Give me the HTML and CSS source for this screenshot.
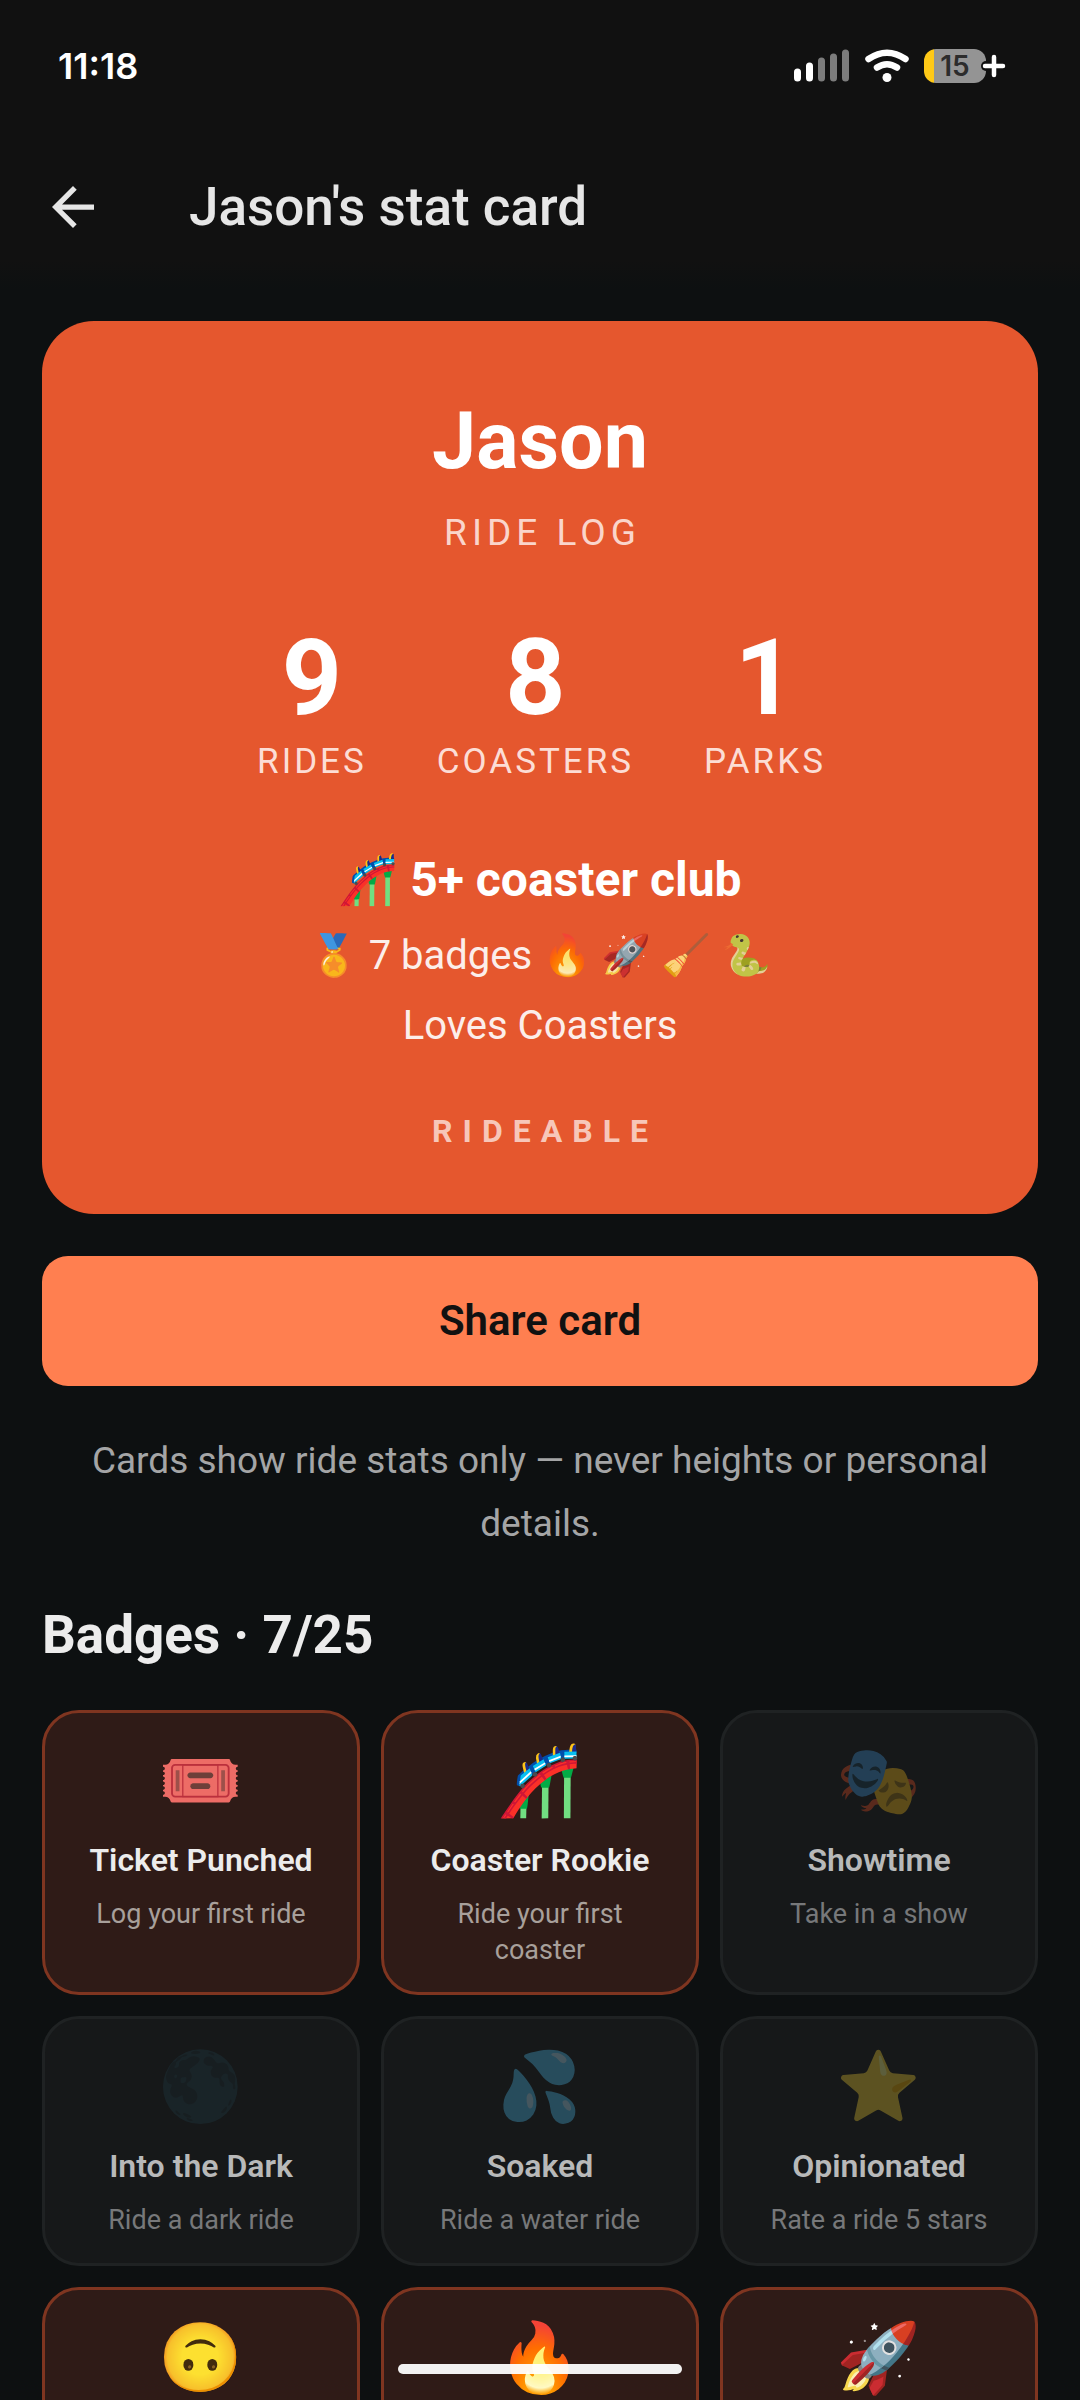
FILE: index.html
```html
<!DOCTYPE html>
<html lang="en">
<head>
<meta charset="utf-8">
<meta name="viewport" content="width=device-width, initial-scale=1">
<title>Jason's stat card</title>
<link rel="stylesheet" href="styles.css">
</head>
<body>
<div class="app">
  <div class="status-bar">
    <span class="clock">11:18</span>
    <div class="status-icons">
      <svg width="56" height="34" viewBox="0 0 56 34" aria-hidden="true">
        <g stroke-width="7" stroke-linecap="round" fill="none">
          <path stroke="#fff" d="M3.500 23v6M15.500 17v12"/>
          <path stroke="#7c7c7c" d="M27.500 12v17M39.500 8v21M51.500 4v25"/>
        </g>
      </svg>
      <svg width="44" height="34" viewBox="0 0 44 34" aria-hidden="true">
        <g fill="none" stroke="#fff" stroke-linecap="round">
          <path stroke-width="6.500" d="M3.500 10Q22-2.500 40.500 10"/>
          <path stroke-width="6.500" d="M12 18.500Q22 12 32 18.500"/>
        </g>
        <circle cx="22" cy="28.500" r="4.500" fill="#fff"/>
      </svg>
      <div class="battery">
        <span class="battery-text">15</span>
        <svg class="battery-plus" width="28" height="28" viewBox="0 0 28 28" aria-hidden="true">
          <g fill="none" stroke-linecap="round">
            <path stroke="#111" stroke-width="10" d="M7 14H22"/>
            <path stroke="#fff" stroke-width="4.500" d="M6 14H24M15 5V23"/>
          </g>
        </svg>
      </div>
    </div>
  </div>

  <header class="app-bar">
    <button class="back" type="button" aria-label="Back">
      <svg width="42" height="42" viewBox="4 4 16 16" aria-hidden="true"><path fill="#e6e6e6" d="M20 11H7.830l5.590-5.590L12 4l-8 8 8 8 1.410-1.410L7.830 13H20v-2z"/></svg>
    </button>
    <h1 class="app-title">Jason's stat card</h1>
  </header>

  <main class="content">
    <section class="stat-card">
      <h2 class="rider">Jason</h2>
      <p class="subtitle">RIDE LOG</p>
      <div class="stats">
        <div class="stat"><span class="stat-value">9</span><span class="stat-label">RIDES</span></div>
        <div class="stat"><span class="stat-value">8</span><span class="stat-label">COASTERS</span></div>
        <div class="stat"><span class="stat-value">1</span><span class="stat-label">PARKS</span></div>
      </div>
      <p class="club">🎢 5+ coaster club</p>
      <p class="card-line">🏅 7 badges 🔥 🚀 🧹 🐍</p>
      <p class="card-line loves">Loves Coasters</p>
      <p class="brand">RIDEABLE</p>
    </section>

    <button class="share" type="button">Share card</button>
    <p class="note">Cards show ride stats only — never heights or personal details.</p>

    <h2 class="badges-title">Badges · 7/25</h2>
    <ul class="badges">
      <li class="badge earned"><span class="emoji">🎟️</span><h3 class="badge-name">Ticket Punched</h3><p class="badge-desc">Log your first ride</p></li>
      <li class="badge earned"><span class="emoji">🎢</span><h3 class="badge-name">Coaster Rookie</h3><p class="badge-desc">Ride your first coaster</p></li>
      <li class="badge"><span class="emoji">🎭</span><h3 class="badge-name">Showtime</h3><p class="badge-desc">Take in a show</p></li>
      <li class="badge"><span class="emoji">🌑</span><h3 class="badge-name">Into the Dark</h3><p class="badge-desc">Ride a dark ride</p></li>
      <li class="badge"><span class="emoji">💦</span><h3 class="badge-name">Soaked</h3><p class="badge-desc">Ride a water ride</p></li>
      <li class="badge"><span class="emoji">⭐</span><h3 class="badge-name">Opinionated</h3><p class="badge-desc">Rate a ride 5 stars</p></li>
      <li class="badge earned"><span class="emoji">🙃</span></li>
      <li class="badge earned"><span class="emoji">🔥</span></li>
      <li class="badge earned"><span class="emoji">🚀</span></li>
    </ul>
  </main>
  <div class="home-indicator"></div>
</div>
</body>
</html>
```
FILE: styles.css
```css
* { box-sizing: border-box; margin: 0; padding: 0; }

body {
  background: #0d1011;
  color: #ececec;
  font-family: Roboto, "Noto Color Emoji", sans-serif;
}

button { border: 0; font: inherit; cursor: pointer; }

.app {
  display: flex;
  flex-direction: column;
  height: 100vh;
  overflow: hidden;
  background: linear-gradient(#111 0, #111 260px, #0d1011 290px);
}

/* Status bar */
.status-bar {
  display: flex;
  align-items: center;
  justify-content: space-between;
  height: 131px;
  padding: 0 75px 0 58px;
}
.clock { font: 600 36px/44px Inter, sans-serif; color: #fff; }
.status-icons { display: flex; align-items: center; gap: 15px; }
.battery {
  position: relative;
  display: flex;
  align-items: center;
  width: 62px;
  height: 34px;
  margin-right: 19px;
  border-radius: 12px;
  background: linear-gradient(90deg, #ffc917 10px, #949494 10px);
}
.battery-text { flex: 1; text-align: center; font: 600 28px/34px Inter, sans-serif; color: #2c2c2c; }
.battery-plus { position: absolute; right: -21px; top: 3px; }

/* App bar */
.app-bar { display: flex; align-items: center; height: 152px; padding: 0 42px; }
.back { display: flex; align-items: center; width: 147px; height: 126px; padding-left: 10px; background: none; }
.app-title { font-size: 53px; font-weight: 500; line-height: 64px; color: #e6e6e6; }

.content { flex: 1; min-height: 0; padding: 38px 42px 0; overflow: hidden; }

/* Stat card */
.stat-card {
  display: flex;
  flex-direction: column;
  align-items: center;
  padding: 74px 42px 60px;
  border-radius: 52px;
  background: #e5572e;
  color: #fff;
  text-align: center;
}
.rider { font-size: 79px; font-weight: 700; line-height: 92px; }
.subtitle { margin-top: 24px; padding-left: 5px; font-size: 37px; line-height: 44px; letter-spacing: 5px; color: #fad5cb; }
.stats { display: flex; gap: 70px; margin-top: 62px; padding-left: 3px; }
.stat { display: flex; flex-direction: column; align-items: center; }
.stat-value { font-size: 105px; font-weight: 700; line-height: 124px; }
.stat-label { font-size: 35px; line-height: 42px; letter-spacing: 3px; color: #fcddd5; }
.club { margin-top: 69px; font-size: 48px; font-weight: 700; line-height: 56px; }
.card-line { margin-top: 20px; font-size: 40px; line-height: 56px; opacity: .9; }
.loves { margin-top: 14px; }
.brand { margin-top: 54px; padding-left: 10px; font-size: 32px; font-weight: 700; line-height: 46px; letter-spacing: 10px; color: #f7c7b9; }

.share {
  display: block;
  width: 100%;
  margin-top: 42px;
  padding: 41px;
  border-radius: 26px;
  background: #ff7f50;
  color: #111;
  font-size: 42px;
  font-weight: 600;
  line-height: 48px;
}
.note { margin-top: 43px; padding: 0 42px; font-size: 37px; line-height: 63px; text-align: center; color: #a4a5a6; }

/* Badges */
.badges-title { margin-top: 48px; font-size: 53px; font-weight: 700; line-height: 64px; }
.badges {
  display: grid;
  grid-template-columns: repeat(3, 1fr);
  gap: 21px;
  margin-top: 43px;
  list-style: none;
}
.badge {
  min-height: 250px;
  padding: 28px 32px 24px;
  border: 3px solid #1f2223;
  border-radius: 37px;
  background: #161819;
  text-align: center;
}
.earned { border-color: #7f3520; background: #2f1b17; }
.emoji { display: block; font-size: 68px; line-height: 80px; opacity: .3; }
.earned .emoji { opacity: 1; }
.badge-name { margin-top: 17px; font-size: 32px; font-weight: 600; line-height: 45px; color: #b8b9b9; }
.earned .badge-name { color: #ececec; }
.badge-desc { margin-top: 13px; font-size: 27px; line-height: 36px; color: #77787a; }
.earned .badge-desc { color: #a8a09b; }

.home-indicator {
  position: fixed;
  bottom: 26px;
  left: 50%;
  width: 284px;
  height: 10px;
  border-radius: 5px;
  background: #fffffff0;
  transform: translateX(-50%);
}
```
